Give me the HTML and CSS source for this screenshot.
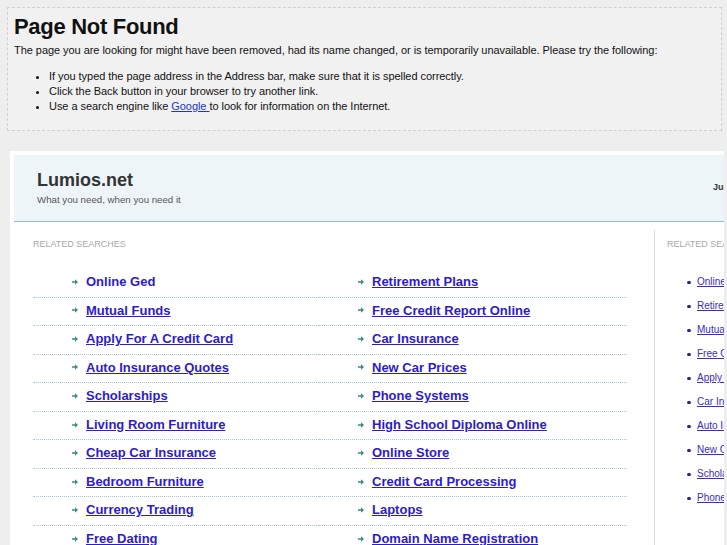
FILE: index.html
```html
<!DOCTYPE html>
<html>
<head>
<meta charset="utf-8">
<title>Page Not Found</title>
<link rel="stylesheet" href="styles.css">
</head>
<body>
<div class="notice">
  <h1 class="notice-title">Page Not Found</h1>
  <p class="notice-text">The page you are looking for might have been removed, had its name changed, or is temporarily unavailable. Please try the following:</p>
  <ul class="notice-list">
    <li>If you typed the page address in the Address bar, make sure that it is spelled correctly.</li>
    <li>Click the Back button in your browser to try another link.</li>
    <li>Use a search engine like <a class="notice-link" href="#">Google </a> to look for information on the Internet.</li>
  </ul>
</div>

<div class="frame">
  <div class="page">
    <header class="site-header">
      <div class="brand">
        <div class="brand-name">Lumios.net</div>
        <div class="brand-tag">What you need, when you need it</div>
      </div>
      <div class="date">June 12, 2011</div>
    </header>
    <div class="content">
      <main class="main">
        <div class="section-label">RELATED SEARCHES</div>
        <ul class="results">
          <li><svg class="arrow" width="6" height="6" viewBox="0 0 6 6"><path d="M0 2.2h3V0.2l3 2.8-3 2.8V3.8H0z"/></svg><a class="result-link plain" href="#">Online Ged</a></li>
          <li><svg class="arrow" width="6" height="6" viewBox="0 0 6 6"><path d="M0 2.2h3V0.2l3 2.8-3 2.8V3.8H0z"/></svg><a class="result-link" href="#">Retirement Plans</a></li>
          <li><svg class="arrow" width="6" height="6" viewBox="0 0 6 6"><path d="M0 2.2h3V0.2l3 2.8-3 2.8V3.8H0z"/></svg><a class="result-link" href="#">Mutual Funds</a></li>
          <li><svg class="arrow" width="6" height="6" viewBox="0 0 6 6"><path d="M0 2.2h3V0.2l3 2.8-3 2.8V3.8H0z"/></svg><a class="result-link" href="#">Free Credit Report Online</a></li>
          <li><svg class="arrow" width="6" height="6" viewBox="0 0 6 6"><path d="M0 2.2h3V0.2l3 2.8-3 2.8V3.8H0z"/></svg><a class="result-link" href="#">Apply For A Credit Card</a></li>
          <li><svg class="arrow" width="6" height="6" viewBox="0 0 6 6"><path d="M0 2.2h3V0.2l3 2.8-3 2.8V3.8H0z"/></svg><a class="result-link" href="#">Car Insurance</a></li>
          <li><svg class="arrow" width="6" height="6" viewBox="0 0 6 6"><path d="M0 2.2h3V0.2l3 2.8-3 2.8V3.8H0z"/></svg><a class="result-link" href="#">Auto Insurance Quotes</a></li>
          <li><svg class="arrow" width="6" height="6" viewBox="0 0 6 6"><path d="M0 2.2h3V0.2l3 2.8-3 2.8V3.8H0z"/></svg><a class="result-link" href="#">New Car Prices</a></li>
          <li><svg class="arrow" width="6" height="6" viewBox="0 0 6 6"><path d="M0 2.2h3V0.2l3 2.8-3 2.8V3.8H0z"/></svg><a class="result-link" href="#">Scholarships</a></li>
          <li><svg class="arrow" width="6" height="6" viewBox="0 0 6 6"><path d="M0 2.2h3V0.2l3 2.8-3 2.8V3.8H0z"/></svg><a class="result-link" href="#">Phone Systems</a></li>
          <li><svg class="arrow" width="6" height="6" viewBox="0 0 6 6"><path d="M0 2.2h3V0.2l3 2.8-3 2.8V3.8H0z"/></svg><a class="result-link" href="#">Living Room Furniture</a></li>
          <li><svg class="arrow" width="6" height="6" viewBox="0 0 6 6"><path d="M0 2.2h3V0.2l3 2.8-3 2.8V3.8H0z"/></svg><a class="result-link" href="#">High School Diploma Online</a></li>
          <li><svg class="arrow" width="6" height="6" viewBox="0 0 6 6"><path d="M0 2.2h3V0.2l3 2.8-3 2.8V3.8H0z"/></svg><a class="result-link" href="#">Cheap Car Insurance</a></li>
          <li><svg class="arrow" width="6" height="6" viewBox="0 0 6 6"><path d="M0 2.2h3V0.2l3 2.8-3 2.8V3.8H0z"/></svg><a class="result-link" href="#">Online Store</a></li>
          <li><svg class="arrow" width="6" height="6" viewBox="0 0 6 6"><path d="M0 2.2h3V0.2l3 2.8-3 2.8V3.8H0z"/></svg><a class="result-link" href="#">Bedroom Furniture</a></li>
          <li><svg class="arrow" width="6" height="6" viewBox="0 0 6 6"><path d="M0 2.2h3V0.2l3 2.8-3 2.8V3.8H0z"/></svg><a class="result-link" href="#">Credit Card Processing</a></li>
          <li><svg class="arrow" width="6" height="6" viewBox="0 0 6 6"><path d="M0 2.2h3V0.2l3 2.8-3 2.8V3.8H0z"/></svg><a class="result-link" href="#">Currency Trading</a></li>
          <li><svg class="arrow" width="6" height="6" viewBox="0 0 6 6"><path d="M0 2.2h3V0.2l3 2.8-3 2.8V3.8H0z"/></svg><a class="result-link" href="#">Laptops</a></li>
          <li><svg class="arrow" width="6" height="6" viewBox="0 0 6 6"><path d="M0 2.2h3V0.2l3 2.8-3 2.8V3.8H0z"/></svg><a class="result-link" href="#">Free Dating</a></li>
          <li><svg class="arrow" width="6" height="6" viewBox="0 0 6 6"><path d="M0 2.2h3V0.2l3 2.8-3 2.8V3.8H0z"/></svg><a class="result-link" href="#">Domain Name Registration</a></li>
        </ul>
      </main>
      <aside class="sidebar">
        <div class="section-label">RELATED SEARCHES</div>
        <ul class="side-list">
          <li><a class="side-link" href="#">Online Ged</a></li>
          <li><a class="side-link" href="#">Retirement Plans</a></li>
          <li><a class="side-link" href="#">Mutual Funds</a></li>
          <li><a class="side-link" href="#">Free Credit Report Online</a></li>
          <li><a class="side-link" href="#">Apply For A Credit Card</a></li>
          <li><a class="side-link" href="#">Car Insurance</a></li>
          <li><a class="side-link" href="#">Auto Insurance Quotes</a></li>
          <li><a class="side-link" href="#">New Car Prices</a></li>
          <li><a class="side-link" href="#">Scholarships</a></li>
          <li><a class="side-link" href="#">Phone Systems</a></li>
        </ul>
      </aside>
    </div>
  </div>
</div>
</body>
</html>
```

FILE: styles.css
```css
html, body {
  margin: 0;
  padding: 0;
}

body {
  background: #eeeeee;
  font-family: "Liberation Sans", Arial, sans-serif;
  color: #111;
  overflow: hidden;
}

.notice {
  margin: 7px 5px 0 7px;
  border: 1px dashed #cfcfcf;
  background: #f1f1f1;
  padding: 0 6px 16px 6px;
}

.notice-title {
  margin: 6px 0 0;
  font-size: 22px;
  line-height: 26px;
  font-weight: bold;
  letter-spacing: -0.3px;
  color: #111;
}

.notice-text {
  margin: 3px 0 0;
  font-size: 11px;
  line-height: 15px;
  letter-spacing: -0.05px;
  white-space: nowrap;
}

.notice-list {
  margin: 11px 0 0;
  padding-left: 35px;
  font-size: 11px;
  line-height: 15px;
  letter-spacing: -0.05px;
}

.notice-link {
  color: #2233cc;
}

.frame {
  margin: 20px 3px 0 10px;
  background: #ffffff;
  padding: 4px 0 0 4px;
  overflow: hidden;
  height: 400px;
}

.page {
  width: 960px;
}

.site-header {
  display: flex;
  background: #eef5f8;
  border-bottom: 1px solid #93b8e8;
  padding: 15px 0 15px 23px;
}

.brand {
  flex: 0 0 676px;
}

.brand-name {
  font-size: 18px;
  line-height: 21px;
  font-weight: bold;
  color: #333;
}

.brand-tag {
  margin-top: 2px;
  font-size: 9.7px;
  line-height: 13px;
  color: #555;
}

.date {
  margin-top: 12px;
  font-size: 9px;
  line-height: 11px;
  font-weight: bold;
  color: #333;
  white-space: nowrap;
}

.content {
  display: flex;
  margin-top: 8px;
}

.main {
  flex: 0 0 640px;
  box-sizing: border-box;
  padding: 9px 27px 0 19px;
}

.section-label {
  font-size: 9px;
  line-height: 11px;
  color: #a8a8a8;
  white-space: nowrap;
}

.results {
  list-style: none;
  margin: 19px 0 0;
  padding: 0;
  display: grid;
  grid-template-columns: 286px 1fr;
}

.results li {
  display: flex;
  align-items: center;
  height: 27.56px;
  padding-left: 39px;
  border-bottom: 1px dotted #a9c3e6;
  box-sizing: content-box;
  white-space: nowrap;
}

.arrow {
  flex: 0 0 6px;
  margin-right: 8px;
  fill: #3a8c80;
  position: relative;
  top: -1px;
}

.result-link {
  font-size: 13px;
  line-height: 25px;
  padding-bottom: 2.5px;
  font-weight: bold;
  color: #2d1bcc;
  text-decoration: underline;
}

.result-link.plain {
  text-decoration: none;
}

.sidebar {
  flex: 0 0 300px;
  border-left: 1px solid #d2def2;
  padding: 9px 0 0 12px;
  min-height: 400px;
}

.side-list {
  list-style: none;
  margin: 20px 0 0;
  padding-left: 20px;
}

.side-list li {
  font-size: 10px;
  line-height: 24px;
  white-space: nowrap;
}

.side-list li::before {
  content: "";
  display: inline-block;
  width: 3.5px;
  height: 3.5px;
  border-radius: 50%;
  background: #2a1f99;
  margin-right: 6.5px;
  vertical-align: 1px;
}

.side-link {
  color: #3a2bcc;
  text-decoration: underline;
}
```
